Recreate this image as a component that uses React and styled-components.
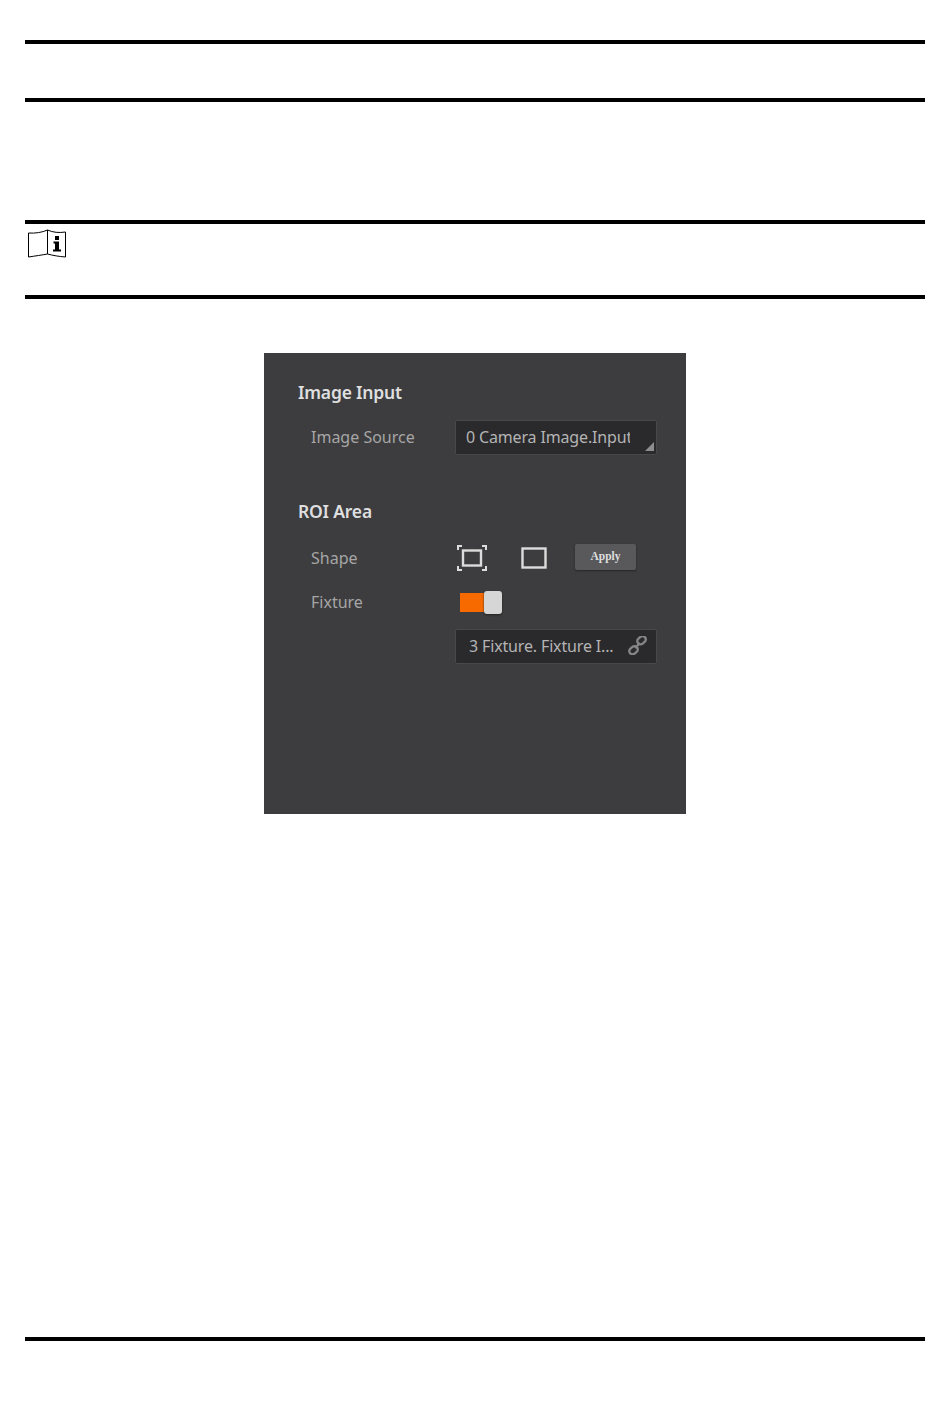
import React from "react";
import styled, { createGlobalStyle } from "styled-components";

const GlobalStyle = createGlobalStyle`
  html, body {
    margin: 0;
    padding: 0;
    background: #fff;
    font-family: "Noto Sans", "Open Sans", sans-serif;
  }
`;

const Page = styled.div`
  width: 950px;
  height: 1408px;
  box-sizing: border-box;
  padding: 40px 25px 0;
  overflow: hidden;
`;

const Rule = styled.div`
  height: 4px;
  background: #000;
  margin-top: ${(p) => p.$top || 0}px;
`;

const NoteRow = styled.div`
  height: 71px;
  padding: 5px 0 0 3px;
  box-sizing: border-box;
`;

const Panel = styled.section`
  width: 422px;
  height: 461px;
  margin: 54px auto 0;
  box-sizing: border-box;
  padding: 27px 29px 0 34px;
  background: #3d3d3f;
`;

const SectionTitle = styled.h2`
  margin: ${(p) => p.$top || 0}px 0 0;
  font-size: 17.5px;
  line-height: 24px;
  font-weight: 600;
  letter-spacing: -0.2px;
  color: #dfdfdf;
`;

const Row = styled.div`
  display: grid;
  grid-template-columns: 144px 202px;
  align-items: center;
  height: ${(p) => p.$height || 35}px;
  margin-top: ${(p) => p.$top || 0}px;
  padding-left: 13px;
`;

const Label = styled.span`
  padding-bottom: 2px;
  font-size: 16px;
  color: #a6a6a6;
`;

const Field = styled.div`
  display: flex;
  align-items: center;
  justify-content: space-between;
  position: relative;
  height: 35px;
  box-sizing: border-box;
  padding: 0 9px 2px ${(p) => p.$pad || 10}px;
  background: #2a2a2c;
  border: 1px solid #484849;
  border-radius: 2px;
  font-size: 16px;
  letter-spacing: -0.15px;
  color: #b4b4b4;
  white-space: nowrap;
`;

const FieldText = styled.span`
  display: block;
  overflow: hidden;
  width: ${(p) => p.$width}px;
`;

const Corner = styled.span`
  position: absolute;
  right: 2px;
  bottom: 3px;
  width: 0;
  height: 0;
  border-left: 9px solid transparent;
  border-bottom: 9px solid #8d8d8d;
`;

const Controls = styled.div`
  display: flex;
  align-items: center;
  margin: -2px 0 0 2px;
`;

const ShapeGap = styled.span`
  width: 34px;
`;

const ApplyButton = styled.button`
  width: 61px;
  height: 26px;
  margin-left: 28px;
  margin-top: -3px;
  padding: 0 0 2px;
  background: #59595b;
  border: none;
  border-radius: 2px;
  box-shadow: 0 1px 2px #252525;
  font-family: "Liberation Serif", serif;
  font-size: 11.5px;
  font-weight: 700;
  color: #dedede;
`;

const Switch = styled.div`
  display: flex;
  align-items: center;
  margin: -2px 0 0 5px;
`;

const SwitchTrack = styled.span`
  width: 24px;
  height: 19px;
  background: #f66a00;
`;

const SwitchKnob = styled.span`
  width: 18px;
  height: 23px;
  background: #d6d6d6;
  border-radius: 3px;
  box-shadow: 0 1px 2px #222;
`;

const BookIcon = () => (
  <svg width="38" height="29" viewBox="0 0 38 29" fill="none" stroke="#000" strokeWidth="1">
    <path d="M0.5 4 C7 4.5 14 3.5 19.5 1 V25 C14 26 7 27 0.5 28 Z" />
    <path d="M19.5 1 C25 3.5 31 4 37.5 3 V28 C31 27.5 25 26.5 19.5 25" />
    <g fill="#000" stroke="none">
      <rect x="27" y="7" width="4" height="4" />
      <path d="M25.5 12.5 H31 V20.5 H33 V22.5 H25 V20.5 H27 V14.5 H25.5 Z" />
    </g>
  </svg>
);

const FullFrameIcon = () => (
  <svg width="30" height="26" viewBox="0 0 30 26" fill="none" stroke="#dcdcdc" display="block">
    <path d="M1 5 V1 H5 M25 1 H29 V5 M1 21 V25 H5 M25 25 H29 V21" strokeWidth="2" />
    <rect x="6" y="5.5" width="18" height="15" strokeWidth="2.4" />
  </svg>
);

const RectIcon = () => (
  <svg width="26" height="22" viewBox="0 0 26 22" fill="none" stroke="#dcdcdc" strokeWidth="2.4" display="block">
    <rect x="1.5" y="1.5" width="23" height="19" />
  </svg>
);

const LinkIcon = () => (
  <svg width="19" height="19" viewBox="0 0 19 19" fill="none" stroke="#858585" strokeWidth="2.4">
    <rect x="9" y="1" width="9" height="6.5" rx="3.2" transform="rotate(-40 13.5 4.2)" />
    <rect x="1" y="11" width="9" height="6.5" rx="3.2" transform="rotate(-40 5.5 14.2)" />
    <path d="M7 12 L12 7" />
  </svg>
);

export default function App() {
  return (
    <>
      <GlobalStyle />
      <Page>
        <Rule />
        <Rule $top={54} />
        <Rule $top={118} />
        <NoteRow>
          <BookIcon />
        </NoteRow>
        <Rule />
        <Panel>
          <SectionTitle>Image Input</SectionTitle>
          <Row $top={16}>
            <Label>Image Source</Label>
            <Field>
              <FieldText $width={164}>0 Camera Image.Input</FieldText>
              <Corner />
            </Field>
          </Row>
          <SectionTitle $top={44}>ROI Area</SectionTitle>
          <Row $top={14} $height={44}>
            <Label>Shape</Label>
            <Controls>
              <FullFrameIcon />
              <ShapeGap />
              <RectIcon />
              <ApplyButton>Apply</ApplyButton>
            </Controls>
          </Row>
          <Row $height={44}>
            <Label>Fixture</Label>
            <Switch>
              <SwitchTrack />
              <SwitchKnob />
            </Switch>
          </Row>
          <Row $top={4}>
            <span />
            <Field $pad={13}>
              <span>3 Fixture. Fixture I...</span>
              <LinkIcon />
            </Field>
          </Row>
        </Panel>
        <Rule $top={523} />
      </Page>
    </>
  );
}
